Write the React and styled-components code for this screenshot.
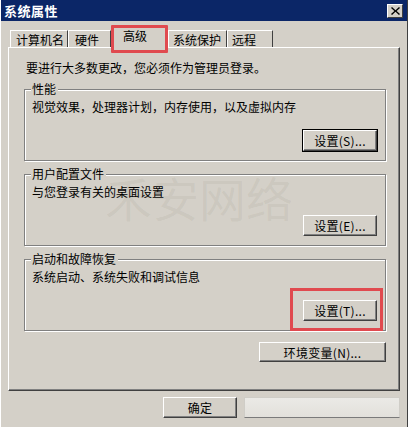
import styled, { createGlobalStyle } from 'styled-components';

const GlobalStyle = createGlobalStyle`
  html, body {
    margin: 0;
    padding: 0;
    background: #d4d0c8;
  }
  body {
    font-family: "Noto Sans CJK SC", "Liberation Sans", sans-serif;
    font-size: 12px;
    color: #000;
  }
`;

// tab widths taken from the screenshot
const tabs = [
  { label: '计算机名', width: 58, pad: 5 },
  { label: '硬件', width: 43, pad: 6 },
  { label: '高级', width: 57, pad: 11, active: true },
  { label: '系统保护', width: 59, pad: 4 },
  { label: '远程', width: 46, pad: 4 },
];

const groups = [
  { title: '性能', desc: '视觉效果，处理器计划，内存使用，以及虚拟内存', button: '设置(S)...', focused: true },
  { title: '用户配置文件', desc: '与您登录有关的桌面设置', button: '设置(E)...' },
  { title: '启动和故障恢复', desc: '系统启动、系统失败和调试信息', button: '设置(T)...', marked: true },
];

const App = () => {
  return (
    <>
      <GlobalStyle />
      <Window>
        <TitleBar>
          <Title>系统属性</Title>
          <CloseButton>
            <svg width="9" height="8" viewBox="0 0 9 8">
              <path d="M1 0 L4.5 3.2 L8 0 L9 1 L5.6 4 L9 7 L8 8 L4.5 4.8 L1 8 L0 7 L3.4 4 L0 1 Z" fill="#000" />
            </svg>
          </CloseButton>
        </TitleBar>

        <Body>
          <TabRow>
            {tabs.map(tab => (
              <Tab key={tab.label} active={tab.active} width={tab.width} pad={tab.pad}>
                {tab.label}
              </Tab>
            ))}
          </TabRow>

          <Panel>
            <Intro>要进行大多数更改，您必须作为管理员登录。</Intro>
            {groups.map(group => (
              <Group key={group.title}>
                <GroupLegend>{group.title}</GroupLegend>
                <GroupDesc>{group.desc}</GroupDesc>
                <GroupActions>
                  {group.marked ? (
                    <Marked>
                      <Button>{group.button}</Button>
                    </Marked>
                  ) : (
                    <Button focused={group.focused}>{group.button}</Button>
                  )}
                </GroupActions>
              </Group>
            ))}
            <EnvRow>
              <Button wide>环境变量(N)...</Button>
            </EnvRow>
            <Watermark>禾安网络</Watermark>
          </Panel>

          <Footer>
            <Button>确定</Button>
            <Blurred />
          </Footer>
        </Body>
      </Window>
    </>
  );
};

const Window = styled.div`
  position: relative;
  width: 408px;
  height: 427px;
  box-sizing: border-box;
  display: flex;
  flex-direction: column;
  background: #d4d0c8;
  border-left: 1px solid #ffffff;
  border-right: 1px solid #404040;
  overflow: hidden;
`;

const TitleBar = styled.div`
  height: 21px;
  display: flex;
  align-items: center;
  justify-content: space-between;
  padding: 0 4px 0 3px;
  background: #0b2667;
`;

const Title = styled.span`
  color: #ffffff;
  font-weight: 700;
  font-size: 13px;
  letter-spacing: 0.5px;
`;

const CloseButton = styled.div`
  width: 16px;
  height: 14px;
  box-sizing: border-box;
  display: flex;
  align-items: center;
  justify-content: center;
  background: #d4d0c8;
  border-top: 1px solid #ffffff;
  border-left: 1px solid #ffffff;
  border-right: 1px solid #404040;
  border-bottom: 1px solid #404040;
`;

const Body = styled.div`
  display: flex;
  flex-direction: column;
  padding: 0 7px 0 7px;
`;

const TabRow = styled.div`
  display: flex;
  align-items: flex-end;
  margin-top: 5px;
  padding-left: 2px;
  position: relative;
  z-index: 1;
`;

const Tab = styled.div`
  position: relative;
  flex: none;
  width: ${({ width }) => width}px;
  height: ${({ active }) => (active ? '22px' : '17px')};
  line-height: ${({ active }) => (active ? '18px' : '17px')};
  padding-left: ${({ pad }) => pad}px;
  margin-bottom: ${({ active }) => (active ? '-1px' : '0')};
  background: #d4d0c8;
  border-top: 1px solid #ffffff;
  border-left: 1px solid #ffffff;
  border-right: 1px solid #404040;
  box-sizing: border-box;
  white-space: nowrap;

  ${({ active }) =>
    active &&
    `
    &::after {
      content: '';
      position: absolute;
      left: -1px;
      right: -1px;
      top: -2px;
      bottom: -5px;
      border: 3px solid #e04a4f;
      border-radius: 1px;
      pointer-events: none;
    }
  `}
`;

const Panel = styled.div`
  position: relative;
  height: 344px;
  box-sizing: border-box;
  display: flex;
  flex-direction: column;
  padding: 13px 13px 0 15px;
  border-top: 1px solid #ffffff;
  border-left: 1px solid #ffffff;
  border-right: 1px solid #404040;
  border-bottom: 1px solid #404040;
  box-shadow: inset -1px -1px 0 #808080;
`;

const Intro = styled.div`
  line-height: 14px;
  padding-left: 2px;
  margin-bottom: 7px;
`;

const Group = styled.fieldset`
  margin: 0 0 6px 0;
  padding: 4px 8px 9px 7px;
  min-width: 0;
  border: 1px solid #808080;
  box-shadow: inset 1px 1px 0 #ffffff, 1px 1px 0 #ffffff;
  display: flex;
  flex-direction: column;
`;

const GroupLegend = styled.legend`
  padding: 0 2px 0 1px;
  margin-left: -1px;
  line-height: 14px;
  background: #d4d0c8;
`;

const GroupDesc = styled.div`
  line-height: 14px;
`;

const GroupActions = styled.div`
  display: flex;
  justify-content: flex-end;
  margin-top: 16px;
`;

const Button = styled.button`
  width: ${({ wide }) => (wide ? '127px' : '74px')};
  height: ${({ wide }) => (wide ? '20px' : '21px')};
  padding: 0;
  font-family: inherit;
  font-size: 12px;
  color: #000;
  background: #d4d0c8;
  border: 1px solid;
  border-color: #ffffff #404040 #404040 #ffffff;
  box-shadow: inset -1px -1px 0 #808080;
  outline: ${({ focused }) => (focused ? '1px solid #000' : 'none')};
  outline-offset: 0;
  border-radius: 0;
  letter-spacing: 0.3px;
`;

const Marked = styled.div`
  position: relative;
  display: flex;

  &::after {
    content: '';
    position: absolute;
    left: -13px;
    right: -6px;
    top: -12px;
    bottom: -10px;
    border: 3px solid #e04a4f;
    pointer-events: none;
  }
`;

const EnvRow = styled.div`
  display: flex;
  justify-content: flex-end;
  margin-top: 5px;
`;

const Watermark = styled.div`
  position: absolute;
  left: 96px;
  top: 114px;
  font-size: 47px;
  letter-spacing: 0;
  color: rgba(90, 80, 70, 0.07);
  pointer-events: none;
`;

const Footer = styled.div`
  display: flex;
  justify-content: flex-end;
  gap: 7px;
  margin-top: 6px;
`;

const Blurred = styled.div`
  width: 156px;
  height: 21px;
  box-sizing: border-box;
  background: linear-gradient(#ebeae6, #e2e0db);
  border: 1px solid #cfcdc7;
  border-bottom-color: #7a7a7a;
`;

export default App;
